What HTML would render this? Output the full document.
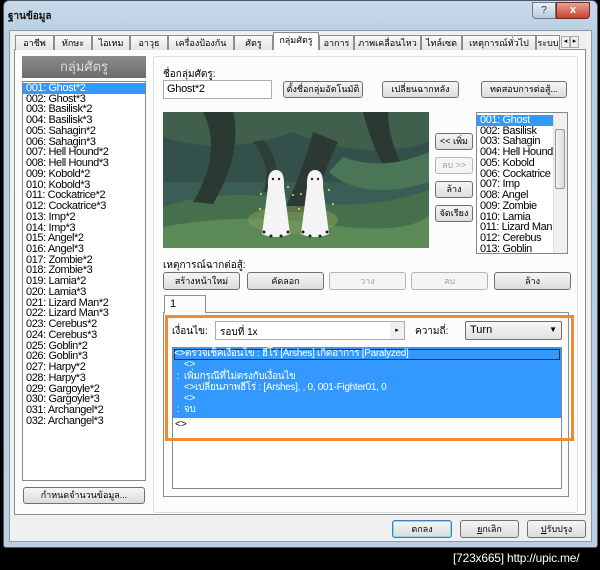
<!DOCTYPE html>
<html><head><meta charset="utf-8"><style>
*{margin:0;padding:0;box-sizing:border-box}
body{width:600px;height:570px;background:#000;position:relative;overflow:hidden;font-family:"Liberation Sans",sans-serif;font-size:11px;color:#000}
.a{position:absolute}
.win{left:3px;top:0;width:595px;height:548px;background:linear-gradient(#c9d9ea,#b8cce0 40px,#bdd0e3);border:1px solid #4a5a6a;border-radius:6px 6px 3px 3px}
.dlg{left:9px;top:30px;width:583px;height:512px;background:#f0f0f0;border:1px solid #8a9aab}
.tab{top:35px;height:15px;background:linear-gradient(#fafafa,#e3e3e3);border:1px solid #8d8d8d;border-bottom:none;font-size:9px;text-align:center;line-height:14px;white-space:nowrap;overflow:hidden}
.panel{left:14px;top:49px;width:572px;height:466px;background:#fcfcfc;border:1px solid #8d8d8d}
.btn{background:linear-gradient(#f5f5f5,#dcdcdc);border:1px solid #707070;border-radius:3px;font-size:9px;text-align:center;white-space:nowrap;overflow:hidden}
.dis{color:#a0a0a0;border-color:#b5b5b5;background:#f4f4f4}
.list{background:#fff;border:1px solid #828790}
.row{height:10.74px;line-height:10.74px;font-size:11px;padding-left:3px;letter-spacing:-.4px;white-space:nowrap}
.sel{background:#3399ff;color:#fff}
</style></head><body>
<div class="a win"></div>
<div class="a" style="left:8px;top:9px;font-size:10px;font-weight:bold;color:#111">ฐานข้อมูล</div>
<div class="a" style="left:532px;top:2px;width:24px;height:17px;border:1px solid #6b7b8b;border-radius:0 0 0 4px;background:linear-gradient(#e6eef6,#b9cadb);text-align:center;font-size:10px;line-height:15px;color:#333">?</div>
<div class="a" style="left:556px;top:2px;width:34px;height:17px;border:1px solid #6b2a22;border-radius:0 0 4px 0;background:linear-gradient(#e8a093,#c6422f);text-align:center;color:#fff;font-weight:bold;font-size:11px;line-height:15px">x</div>
<div class="a dlg"></div>
<div class="a panel"></div>
<div class="a tab" style="left:15px;width:39px">อาชีพ</div>
<div class="a tab" style="left:54px;width:38px">ทักษะ</div>
<div class="a tab" style="left:92px;width:38px">ไอเทม</div>
<div class="a tab" style="left:130px;width:38px">อาวุธ</div>
<div class="a tab" style="left:168px;width:66px">เครื่องป้องกัน</div>
<div class="a tab" style="left:234px;width:39px">ศัตรู</div>
<div class="a tab" style="left:273px;top:32px;height:18px;width:46px;background:#fcfcfc;z-index:2">กลุ่มศัตรู</div>
<div class="a tab" style="left:319px;width:35px">อาการ</div>
<div class="a tab" style="left:354px;width:67px">ภาพเคลื่อนไหว</div>
<div class="a tab" style="left:421px;width:41px">ไทล์เซต</div>
<div class="a tab" style="left:462px;width:74px">เหตุการณ์ทั่วไป</div>
<div class="a tab" style="left:536px;width:24px">ระบบ</div>
<div class="a" style="left:561px;top:36px;width:9px;height:12px;border:1px solid #aaa;background:#eee;font-size:7px;line-height:10px;text-align:center">◂</div>
<div class="a" style="left:570px;top:36px;width:9px;height:12px;border:1px solid #aaa;background:#eee;font-size:7px;line-height:10px;text-align:center">▸</div>

<div class="a" style="left:22px;top:56px;width:124px;height:22px;background:linear-gradient(#8a8a8a,#6d6d6d);color:#ddd;font-size:13px;text-align:center;line-height:22px">กลุ่มศัตรู</div>
<div class="a list" style="left:22px;top:81px;width:124px;height:400px;padding-top:1px">
<div class="row sel">001: Ghost*2</div><div class="row">002: Ghost*3</div><div class="row">003: Basilisk*2</div><div class="row">004: Basilisk*3</div><div class="row">005: Sahagin*2</div><div class="row">006: Sahagin*3</div><div class="row">007: Hell Hound*2</div><div class="row">008: Hell Hound*3</div><div class="row">009: Kobold*2</div><div class="row">010: Kobold*3</div><div class="row">011: Cockatrice*2</div><div class="row">012: Cockatrice*3</div><div class="row">013: Imp*2</div><div class="row">014: Imp*3</div><div class="row">015: Angel*2</div><div class="row">016: Angel*3</div><div class="row">017: Zombie*2</div><div class="row">018: Zombie*3</div><div class="row">019: Lamia*2</div><div class="row">020: Lamia*3</div><div class="row">021: Lizard Man*2</div><div class="row">022: Lizard Man*3</div><div class="row">023: Cerebus*2</div><div class="row">024: Cerebus*3</div><div class="row">025: Goblin*2</div><div class="row">026: Goblin*3</div><div class="row">027: Harpy*2</div><div class="row">028: Harpy*3</div><div class="row">029: Gargoyle*2</div><div class="row">030: Gargoyle*3</div><div class="row">031: Archangel*2</div><div class="row">032: Archangel*3</div>
</div>
<div class="a btn" style="left:23px;top:487px;width:122px;height:17px;line-height:15px">กำหนดจำนวนข้อมูล...</div>

<div class="a" style="left:153px;top:56px;width:425px;height:457px;border:1px solid #d5dfe5;border-radius:3px;background:#fcfcfc"></div>
<div class="a" style="left:163px;top:67px;font-size:10px">ชื่อกลุ่มศัตรู:</div>
<div class="a" style="left:163px;top:80px;width:109px;height:19px;border:1px solid #abadb3;background:#fff;font-size:11px;padding:2px 3px;letter-spacing:-.3px">Ghost*2</div>
<div class="a btn" style="left:283px;top:81px;width:80px;height:17px;line-height:15px">ตั้งชื่อกลุ่มอัตโนมัติ</div>
<div class="a btn" style="left:382px;top:81px;width:77px;height:17px;line-height:15px">เปลี่ยนฉากหลัง</div>
<div class="a btn" style="left:481px;top:81px;width:86px;height:17px;line-height:15px">ทดสอบการต่อสู้...</div>

<svg class="a" style="left:163px;top:112px" width="266" height="136" viewBox="0 0 266 136">
<rect width="266" height="136" fill="#3a5e55"/>
<rect width="266" height="70" fill="#33504a"/>
<path d="M0 0 H266 V30 Q200 50 130 20 Q60 45 0 25Z" fill="#405f4c"/>
<path d="M0 95 Q60 75 130 88 T266 78 V136 H0Z" fill="#466f4c"/>
<path d="M0 115 Q80 100 160 112 T266 104 V136 H0Z" fill="#5b8a56"/>
<path d="M150 20 Q140 60 120 100 L150 100 Q160 60 175 30Z" fill="#2c3a33"/>
<path d="M40 0 Q60 40 30 90 L50 92 Q80 40 70 0Z" fill="#2a3a32"/>
<path d="M200 0 Q210 40 230 70 L245 65 Q225 30 225 0Z" fill="#2a3a32"/>
<path d="M90 30 Q110 55 100 80 L110 80 Q120 50 100 28Z" fill="#2e3d35"/>
<path d="M166 60 Q200 90 266 70 V40 Q220 60 180 45Z" fill="#4a7557"/>
<ellipse cx="130" cy="108" rx="45" ry="14" fill="#7d9a5a" opacity=".6"/>
<path d="M105 75 Q104 58 113 58 Q122 58 121 75 L127 122 Q113 128 99 122Z" fill="#f4f4f4"/>
<path d="M144 75 Q143 58 152 58 Q161 58 160 75 L166 122 Q152 128 138 122Z" fill="#f4f4f4"/>
<g fill="#222"><circle cx="110" cy="67" r="1.2"/><circle cx="116" cy="67" r="1.2"/><circle cx="149" cy="67" r="1.2"/><circle cx="155" cy="67" r="1.2"/>
<circle cx="101" cy="120" r="1.5"/><circle cx="108" cy="124" r="1.5"/><circle cx="118" cy="124" r="1.5"/><circle cx="125" cy="120" r="1.5"/>
<circle cx="140" cy="120" r="1.5"/><circle cx="147" cy="124" r="1.5"/><circle cx="157" cy="124" r="1.5"/><circle cx="164" cy="120" r="1.5"/></g>
<g fill="#e8e050"><circle cx="98" cy="82" r="1"/><circle cx="125" cy="75" r="1"/><circle cx="130" cy="83" r="1"/><circle cx="97" cy="97" r="1"/><circle cx="138" cy="82" r="1"/><circle cx="166" cy="78" r="1"/><circle cx="170" cy="92" r="1"/><circle cx="136" cy="97" r="1"/></g>
</svg>
<div class="a btn" style="left:435px;top:133px;width:38px;height:17px;line-height:15px">&lt;&lt; เพิ่ม</div>
<div class="a btn dis" style="left:435px;top:157px;width:38px;height:17px;line-height:15px">ลบ &gt;&gt;</div>
<div class="a btn" style="left:435px;top:181px;width:38px;height:17px;line-height:15px">ล้าง</div>
<div class="a btn" style="left:435px;top:205px;width:38px;height:17px;line-height:15px">จัดเรียง</div>
<div class="a list" style="left:476px;top:112px;width:92px;height:142px;padding-top:2px;overflow:hidden">
<div class="row sel" style="width:76px">001: Ghost</div><div class="row">002: Basilisk</div><div class="row">003: Sahagin</div><div class="row">004: Hell Hound</div><div class="row">005: Kobold</div><div class="row">006: Cockatrice</div><div class="row">007: Imp</div><div class="row">008: Angel</div><div class="row">009: Zombie</div><div class="row">010: Lamia</div><div class="row">011: Lizard Man</div><div class="row">012: Cerebus</div><div class="row">013: Goblin</div>
<div class="a" style="right:0;top:0;width:14px;height:140px;background:#f0f0f0;border-left:1px solid #e0e0e0"></div>
<div class="a" style="right:2px;top:16px;width:10px;height:60px;background:linear-gradient(90deg,#f2f2f2,#dcdcdc);border:1px solid #999;border-radius:2px"></div>
</div>

<div class="a" style="left:163px;top:258px;font-size:10px">เหตุการณ์ฉากต่อสู้:</div>
<div class="a btn" style="left:163px;top:272px;width:77px;height:18px;line-height:16px">สร้างหน้าใหม่</div>
<div class="a btn" style="left:247px;top:272px;width:77px;height:18px;line-height:16px">คัดลอก</div>
<div class="a btn dis" style="left:329px;top:272px;width:77px;height:18px;line-height:16px">วาง</div>
<div class="a btn dis" style="left:411px;top:272px;width:77px;height:18px;line-height:16px">ลบ</div>
<div class="a btn" style="left:494px;top:272px;width:77px;height:18px;line-height:16px">ล้าง</div>
<div class="a" style="left:163px;top:312px;width:406px;height:185px;border:1px solid #8d8d8d;background:#fcfcfc"></div>
<div class="a" style="left:164px;top:295px;width:42px;height:18px;border:1px solid #8d8d8d;border-bottom:none;background:#fcfcfc;font-size:11px;padding:2px 5px">1</div>
<div class="a" style="left:172px;top:347px;width:390px;height:142px;border:1px solid #828790;background:#fff"></div>
<div class="a" style="left:173px;top:348px;width:388px;height:70px;background:#3399ff"></div>
<div class="a" style="left:174px;top:349px;width:386px;height:11px;border:1px solid #333;"></div>
<div class="a" style="left:174px;top:348px;color:#fff;font-size:10px;line-height:11.3px;white-space:pre;letter-spacing:-.3px">&lt;&gt;ตรวจเช็คเงื่อนไข : ฮีโร่ [Arshes] เกิดอาการ [Paralyzed]
    &lt;&gt;
 :  เพิ่มกรณีที่ไม่ตรงกับเงื่อนไข
    &lt;&gt;เปลี่ยนภาพฮีโร่ : [Arshes], , 0, 001-Fighter01, 0
    &lt;&gt;
 :  จบ</div>
<div class="a" style="left:175px;top:419px;font-size:10px">&lt;&gt;</div>
<div class="a" style="left:172px;top:324px;font-size:10px">เงื่อนไข:</div>
<div class="a" style="left:215px;top:321px;width:190px;height:19px;border:1px solid #abadb3;background:#fff;font-size:10px;padding:3px 4px">รอบที่ 1x</div>
<div class="a" style="left:390px;top:322px;width:14px;height:17px;background:#f0f0f0;font-size:7px;text-align:center;line-height:17px">▸</div>
<div class="a" style="left:415px;top:324px;font-size:10px">ความถี่:</div>
<div class="a" style="left:465px;top:321px;width:97px;height:19px;border:1px solid #707070;border-radius:2px;background:linear-gradient(#f6f6f6,#e2e2e2);font-size:11px;padding:2px 4px">Turn<span style="position:absolute;right:4px;top:3px;font-size:8px">▼</span></div>
<div class="a" style="left:165px;top:315px;width:409px;height:126px;border:3px solid #f28b30"></div>

<div class="a btn" style="left:392px;top:520px;width:60px;height:18px;line-height:16px;border-color:#3c7fb1;box-shadow:inset 0 0 0 1px #8fd3f5">ตกลง</div>
<div class="a btn" style="left:460px;top:520px;width:59px;height:18px;line-height:16px"><u>ย</u>กเลิก</div>
<div class="a btn" style="left:527px;top:520px;width:59px;height:18px;line-height:16px"><u>ป</u>รับปรุง</div>
<div class="a" style="left:453px;top:551px;color:#fff;font-family:'Liberation Sans Narrow','Liberation Sans',sans-serif;font-size:12px;letter-spacing:-.2px;white-space:nowrap">[723x665] http://upic.me/</div>
</body></html>
